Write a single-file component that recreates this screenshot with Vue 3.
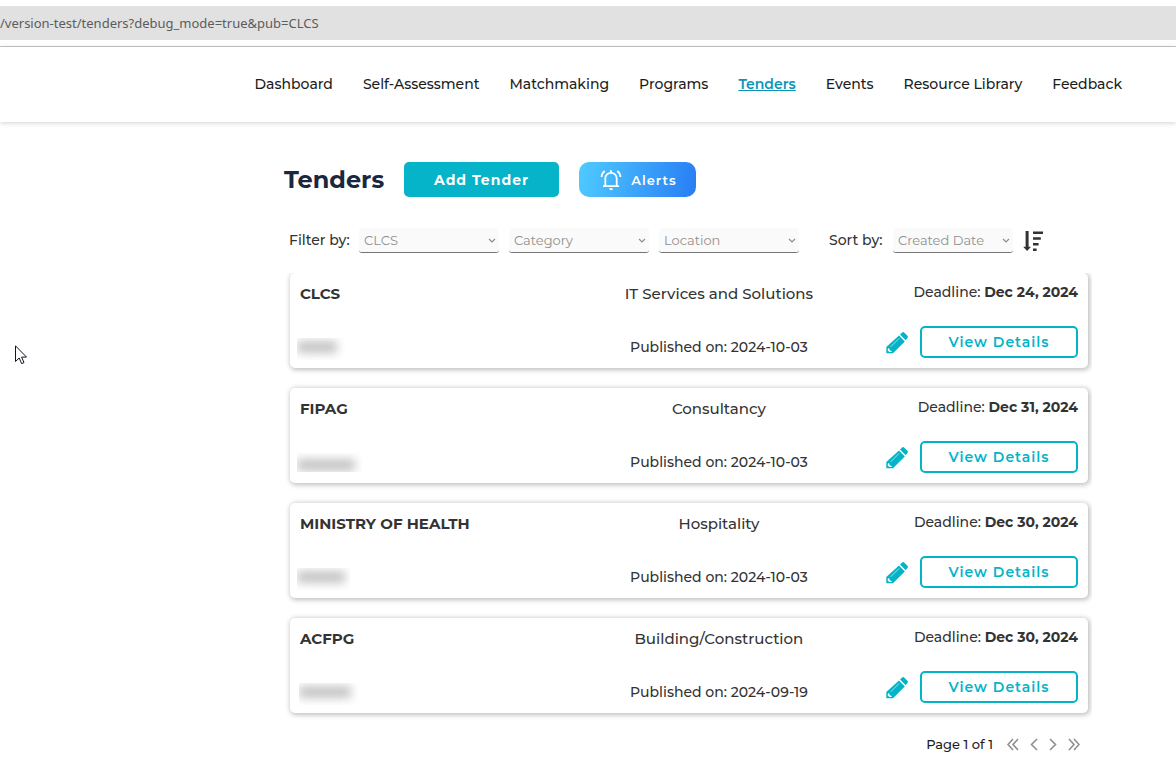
<script setup>
import { ref } from 'vue'

const links = ['Dashboard', 'Self-Assessment', 'Matchmaking', 'Programs', 'Tenders', 'Events', 'Resource Library', 'Feedback']
const active = ref('Tenders')

const filters = [
  { id: 'publisher', label: 'Publisher', value: 'CLCS' },
  { id: 'category', label: 'Category', value: 'Category' },
  { id: 'location', label: 'Location', value: 'Location' }
]

const tenders = [
  { publisher: 'CLCS', category: 'IT Services and Solutions', published: '2024-10-03', deadline: 'Dec 24, 2024', mask: 'mask-a' },
  { publisher: 'FIPAG', category: 'Consultancy', published: '2024-10-03', deadline: 'Dec 31, 2024', mask: 'mask-b' },
  { publisher: 'MINISTRY OF HEALTH', category: 'Hospitality', published: '2024-10-03', deadline: 'Dec 30, 2024', mask: 'mask-c' },
  { publisher: 'ACFPG', category: 'Building/Construction', published: '2024-09-19', deadline: 'Dec 30, 2024', mask: 'mask-d' }
]

const pagers = [
  { label: 'First page', width: 12, d: 'M6 1 1 6.500 6 12M11 1 6 6.500 11 12' },
  { label: 'Previous page', width: 8, d: 'M7 1 1.500 6.500 7 12' },
  { label: 'Next page', width: 8, d: 'M1 1 6.500 6.500 1 12' },
  { label: 'Last page', width: 12, d: 'M1 1 6 6.500 1 12M6 1 11 6.500 6 12' }
]
</script>

<template>
  <div class="page">
    <div class="browser">
      <div class="address">/version-test/tenders?debug_mode=true&amp;pub=CLCS</div>
    </div>

    <header class="header">
      <nav class="nav" aria-label="Main">
        <a v-for="link in links" :key="link" href="#" :class="{ active: link === active }" @click.prevent="active = link">{{ link }}</a>
      </nav>
    </header>

    <main class="main">
      <div class="title-row">
        <h1>Tenders</h1>
        <button type="button" class="add">Add Tender</button>
        <button type="button" class="alerts">
          <svg width="22" height="22" viewBox="0 0 22 22" fill="none" stroke="#fff" stroke-width="1.8" aria-hidden="true">
            <path d="M3 17.200h16M5.300 17V9.500a5.700 5.700 0 0 1 11.400 0V17" />
            <path d="M11 1.200v2.500M4.700 2C2.800 3.400 1.700 5.500 1.500 8M17.300 2c1.900 1.400 3 3.500 3.200 6" />
            <path d="M9 19.200h4a2 2 0 0 1-4 0Z" fill="#fff" stroke="none" />
          </svg>
          <span>Alerts</span>
        </button>
      </div>

      <div class="filters">
        <span class="caption">Filter by:</span>
        <span v-for="f in filters" :key="f.id" class="select">
          <select :id="f.id" :aria-label="f.label"><option>{{ f.value }}</option></select>
          <svg width="8" height="6" viewBox="0 0 8 6" aria-hidden="true"><path d="M1 1l3 3 3-3" /></svg>
        </span>
        <label class="caption sort-caption" for="sort">Sort by:</label>
        <span class="select sort">
          <select id="sort"><option>Created Date</option></select>
          <svg width="8" height="6" viewBox="0 0 8 6" aria-hidden="true"><path d="M1 1l3 3 3-3" /></svg>
        </span>
        <button type="button" class="order" aria-label="Sort descending">
          <svg width="20" height="20" viewBox="0 0 20 20" fill="#333" aria-hidden="true">
            <path d="M2.600 0h3v15.800H8L4.100 20 .2 15.800h2.400Z" />
            <path d="M10 .500h10v2.600H10ZM10 6.200h7.800v2.600H10ZM10 11.900h5.600v2.600H10ZM10 17.400h3.600V20H10Z" />
          </svg>
        </button>
      </div>

      <div class="list">
        <article v-for="t in tenders" :key="t.publisher" class="card">
          <div class="left">
            <h2>{{ t.publisher }}</h2>
            <div class="mask" :class="t.mask" aria-hidden="true"><i></i></div>
          </div>
          <div class="middle">
            <span class="category">{{ t.category }}</span>
            <span class="published">Published on: {{ t.published }}</span>
          </div>
          <div class="right">
            <span class="deadline">Deadline: <b>{{ t.deadline }}</b></span>
            <div class="actions">
              <button type="button" class="edit" aria-label="Edit tender">
                <svg width="22" height="24" viewBox="0 0 22 24" aria-hidden="true">
                  <path fill="#03b4c8" d="M13 5.600l5.800 5.800L7 23.200H.300v-6.100Z" />
                  <path fill="#03b4c8" d="M14 4.600l1.900-1.900c.8-.8 1.700-.8 2.500 0l3 3c.7.700.7 1.600 0 2.400l-1.700 2.200Z" />
                  <path fill="#fff" d="M2.200 18.200l1.200.3.300 1.900 1.800.4.300 1-1.300.300H3.400L1.800 20.600v-1.600Z" />
                  <path fill="none" stroke="#fff" stroke-width=".6" d="M4.700 16.800l8.500-8.500" />
                </svg>
              </button>
              <button type="button" class="details">View Details</button>
            </div>
          </div>
        </article>
      </div>

      <div class="pagination">
        <span>Page 1 of 1</span>
        <div class="pagers">
          <button v-for="p in pagers" :key="p.label" type="button" :aria-label="p.label">
            <svg :width="p.width" height="13" :viewBox="`0 0 ${p.width} 13`" aria-hidden="true"><path :d="p.d" /></svg>
          </button>
        </div>
      </div>
    </main>

    <svg class="cursor" width="12" height="20" viewBox="0 0 12 20" aria-hidden="true">
      <path d="M.5.800v15.700l3.700-3.500 2.400 5.600 2.400-1-2.400-5.500h4.900Z" fill="#fff" stroke="#15151f" />
    </svg>
  </div>
</template>

<style>
body {
  margin: 0;
  background: #fff;
}
</style>

<style scoped>
.page {
  position: relative;
  min-height: 100vh;
  overflow: hidden;
  box-sizing: border-box;
  font-family: Montserrat, Inter, "Liberation Sans", sans-serif;
  color: #333;
}
button {
  padding: 0;
  border: 0;
  background: none;
  font-family: inherit;
  cursor: pointer;
}
svg {
  display: block;
}
.browser {
  padding: 6px 0;
  border-bottom: 1px solid #c8c8c8;
}
.address {
  height: 34px;
  line-height: 34px;
  background: #e1e1e1;
  color: #5c5c5c;
  font-family: "Noto Sans", sans-serif;
  font-size: 13px;
}
.header {
  height: 75px;
  padding: 0 54px;
  display: flex;
  align-items: center;
  justify-content: flex-end;
  box-shadow: 0 1px 5px rgba(0, 0, 0, 0.18);
}
.nav {
  display: flex;
  gap: 30px;
  padding-bottom: 2px;
  font-size: 14px;
  font-weight: 500;
  line-height: 20px;
  white-space: nowrap;
}
.nav a {
  color: #1c1c1c;
  text-decoration: none;
}
.nav a.active {
  color: #0c94b8;
  font-weight: 600;
  text-decoration: underline;
}
.main {
  padding: 40px 84px 12px 284px;
}
.title-row {
  display: flex;
  align-items: center;
  height: 35px;
}
h1 {
  width: 120px;
  margin: 0;
  color: #1b2740;
  font-size: 24px;
  font-weight: 700;
}
.add {
  width: 155px;
  height: 35px;
  margin-right: 20px;
  border-radius: 5px;
  background: #05b4c9;
  color: #fff;
  font-size: 14px;
  font-weight: 700;
  letter-spacing: 1px;
}
.alerts {
  display: flex;
  align-items: center;
  justify-content: center;
  gap: 9px;
  width: 117px;
  height: 35px;
  padding-left: 2px;
  border-radius: 10px;
  background: linear-gradient(100deg, #4fcbff, #287df4);
  color: #fff;
  font-size: 13px;
  font-weight: 600;
  letter-spacing: 1px;
}
.filters {
  display: flex;
  align-items: center;
  height: 25px;
  margin-top: 31px;
  padding-left: 5px;
}
.caption {
  width: 70px;
  padding-bottom: 1px;
  font-size: 14px;
  font-weight: 500;
  line-height: 20px;
}
.sort-caption {
  width: 64px;
  margin-left: 20px;
}
.select {
  position: relative;
  width: 140px;
  margin-right: 10px;
}
.select.sort {
  width: 120px;
}
.select select {
  display: block;
  width: 100%;
  height: 25px;
  padding: 0 5px;
  appearance: none;
  border: 0;
  border-bottom: 1px solid #757575;
  border-radius: 3px;
  background: #fafafa;
  color: #919191;
  font-family: inherit;
  font-size: 13px;
}
.select svg {
  position: absolute;
  right: 3px;
  top: 10px;
  pointer-events: none;
  fill: none;
  stroke: #8c8c8c;
  stroke-width: 1.2;
}
.list {
  display: grid;
  gap: 20px;
  margin-top: 20px;
  padding: 0 4px 10px 6px;
  overflow: hidden;
}
.card {
  display: grid;
  grid-template-columns: 5fr 4fr 4fr;
  height: 95px;
  padding: 0 10px;
  box-sizing: border-box;
  border-radius: 5px;
  background: #fff;
  box-shadow: 1px 1px 5px 1px rgba(0, 0, 0, 0.25);
}
.left,
.middle,
.right {
  display: flex;
  flex-direction: column;
  line-height: 20px;
  white-space: nowrap;
}
.left {
  padding-top: 11px;
}
h2 {
  margin: 0;
  font-size: 15px;
  font-weight: 700;
  line-height: 20px;
}
.mask {
  width: 50px;
  height: 22px;
  margin: 34px 0 0 -3px;
  overflow: hidden;
}
.mask i {
  display: block;
  width: 40px;
  height: 12px;
  margin-top: 3px;
  background: #c4c4c4;
  filter: blur(5px);
}
.mask-b {
  width: 65px;
  height: 19px;
}
.mask-b i {
  width: 58px;
  margin-top: 6px;
}
.mask-c {
  width: 53px;
}
.mask-c i {
  width: 48px;
}
.mask-d {
  width: 59px;
  margin-left: -1px;
}
.mask-d i {
  width: 52px;
}
.middle {
  align-items: center;
  padding-top: 11px;
  gap: 33px;
}
.category {
  font-size: 15px;
  font-weight: 500;
}
.published {
  font-size: 14px;
  font-weight: 500;
}
.right {
  align-items: flex-end;
  padding-top: 9px;
  gap: 24px;
}
.deadline {
  font-size: 14px;
  font-weight: 500;
}
.deadline b {
  font-weight: 700;
}
.actions {
  display: flex;
  align-items: center;
  gap: 12px;
}
.details {
  width: 158px;
  height: 32px;
  border: 2px solid #03b4c8;
  border-radius: 5px;
  color: #03b4c8;
  font-size: 14px;
  font-weight: 600;
  letter-spacing: 1px;
}
.pagination {
  display: flex;
  align-items: center;
  justify-content: flex-end;
  gap: 14px;
  height: 20px;
  margin-top: 11px;
  padding-right: 12px;
  color: #1c1c1c;
  font-size: 13px;
  font-weight: 500;
}
.pagers {
  display: flex;
  gap: 11px;
}
.pagers svg {
  fill: none;
  stroke: #8f8f8f;
  stroke-width: 1.6;
}
.cursor {
  position: absolute;
  left: 15px;
  top: 345px;
}
</style>
